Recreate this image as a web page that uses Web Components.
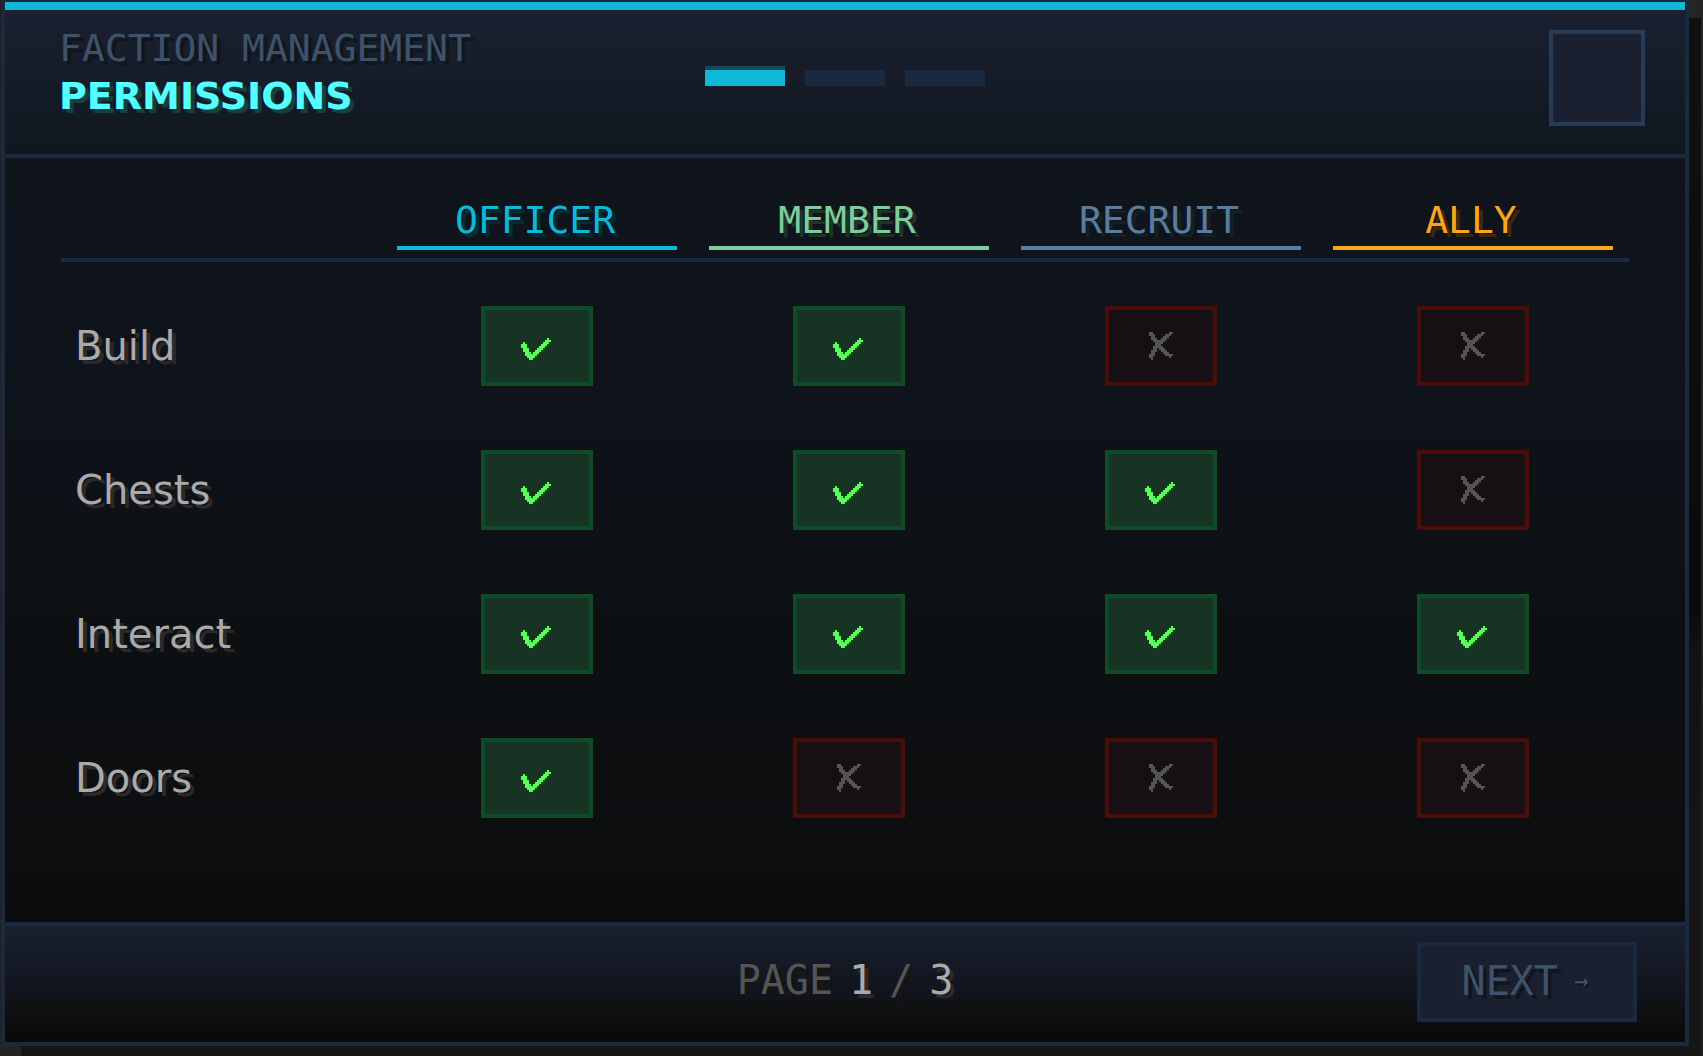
<!DOCTYPE html>
<html lang="en">
<head>
<meta charset="utf-8">
<title>Faction Management</title>
<style>
  :root {
    --line: #1b2940; --muted: #3f526b; --px: 4px;
    --mono: "DejaVu Sans Mono", monospace; --sans: "DejaVu Sans", sans-serif;
  }
  * { box-sizing: border-box; }
  body {
    margin: 0; min-height: 100vh; display: flex; flex-direction: column;
    padding: 0 14px 10px 1px;
    font: 38px/48px var(--mono);
    background:
      linear-gradient(#242424, #202020) right top / 2px 100% no-repeat,
      linear-gradient(#252523, #252523) right top / 14px 18px no-repeat,
      linear-gradient(#242424, #242424) left bottom / 21px 10px no-repeat,
      linear-gradient(#22211f, #22211f) left top / 1px 100% no-repeat,
      linear-gradient(#10110f, #0b0b0b 58%, #131313 62%, #161616);
  }
</style>
</head>
<body>
<faction-panel>
  <panel-header slot="header" heading="FACTION MANAGEMENT" subject="PERMISSIONS" pages="3" page="1"></panel-header>
  <permission-table></permission-table>
  <panel-footer slot="footer" page="1" pages="3"></panel-footer>
</faction-panel>

<script>
const base = '<style>*{box-sizing:border-box}button{font:inherit;color:inherit;cursor:pointer;border-radius:0;margin:0}</style>';

class FactionPanel extends HTMLElement {
  constructor() {
    super();
    this.attachShadow({ mode: 'open' }).innerHTML = base + `
      <style>
        :host { flex: 1; display: flex; flex-direction: column;
          border: var(--px) solid var(--line); border-top-width: 2px;
          background: linear-gradient(#10151c, #0f131b 35%, #0d1013 60%, #0b0b0c); }
        .accent { height: 8px; background: #10b8d8; }
        main { flex: 1; padding: 24px 56px 0; }
      </style>
      <div class="accent"></div>
      <slot name="header"></slot>
      <main><slot></slot></main>
      <slot name="footer"></slot>`;
  }
}
customElements.define('faction-panel', FactionPanel);

class PageSteps extends HTMLElement {
  connectedCallback() {
    const page = +this.getAttribute('page'), pages = +this.getAttribute('pages');
    this.attachShadow({ mode: 'open' }).innerHTML = base + `
      <style>
        :host { display: flex; gap: 20px; }
        i { width: 80px; height: 16px; background: var(--line); }
        i.on { background: #10b8d8; box-shadow: 0 -4px #134855; }
      </style>` +
      Array.from({ length: pages }, (_, n) => `<i class="${n + 1 === page ? 'on' : ''}"></i>`).join('');
  }
}
customElements.define('page-steps', PageSteps);

class PanelHeader extends HTMLElement {
  connectedCallback() {
    const at = n => this.getAttribute(n);
    this.attachShadow({ mode: 'open' }).innerHTML = base + `
      <style>
        :host { display: block; border-bottom: var(--px) solid var(--line);
          background: linear-gradient(#1a2030, #11171f); }
        header { display: grid; grid-template-columns: 1fr auto 1fr; height: 144px; padding: 0 40px; }
        .titles { padding: 14px 0 0 14px; white-space: nowrap; }
        p, h1 { margin: 0; font-size: 38px; line-height: 48px; }
        p { color: var(--muted); text-shadow: 4px 4px #10161b; }
        h1 { font-family: var(--sans); font-weight: bold; color: #55ffff; text-shadow: 4px 4px #153f3f; }
        page-steps { padding-top: 60px; }
        button { justify-self: end; width: 96px; height: 96px; margin-top: 20px;
          border: var(--px) solid #273b57; background: #1a2030; }
      </style>
      <header>
        <div class="titles"><p>${at('heading')}</p><h1>${at('subject')}</h1></div>
        <page-steps page="${at('page')}" pages="${at('pages')}"></page-steps>
        <button type="button" aria-label="Close"></button>
      </header>`;
  }
}
customElements.define('panel-header', PanelHeader);

/* Pixel glyphs: each entry is [row, first column, cell count]. */
const glyphs = {
  yes: { w: 15, h: 11, runs: [[0,13,1],[1,12,3],[2,1,1],[2,11,3],[3,0,3],[3,10,3],[4,0,3],[4,9,3],[5,1,3],[5,8,3],[6,1,3],[6,7,3],[7,2,3],[7,6,3],[8,2,6],[9,3,4],[10,4,2]] },
  no: { w: 12, h: 14, runs: [[0,0,2],[0,10,2],[1,0,3],[1,8,3],[2,1,2],[2,7,3],[3,1,3],[3,6,3],[4,2,6],[5,3,4],[6,3,3],[7,2,5],[8,2,2],[8,5,3],[9,1,3],[9,6,3],[10,1,2],[10,7,3],[11,0,3],[11,8,4],[12,0,2],[12,10,1],[13,1,1]] }
};
const glyphSvg = name => {
  const g = glyphs[name];
  const d = g.runs.map(([y, x, n]) => `M${x} ${y}h${n}v1h-${n}z`).join('');
  return `<svg width="${g.w * 2}" height="${g.h * 2}" viewBox="0 0 ${g.w} ${g.h}" shape-rendering="crispEdges" aria-hidden="true"><path d="${d}" fill="currentColor"/></svg>`;
};

class PermissionToggle extends HTMLElement {
  connectedCallback() {
    const on = this.hasAttribute('allowed');
    this.attachShadow({ mode: 'open' }).innerHTML = base + `
      <style>
        :host { display: flex; justify-content: center; }
        button { display: flex; align-items: center; justify-content: center;
          width: 112px; height: 80px; padding: 0; border: var(--px) solid #4a0e08;
          background: #160f13; color: #555; }
        svg { display: block; overflow: visible; filter: drop-shadow(2px 2px 0 #151515); }
        button[aria-pressed="true"] { border-color: #104b28; background: #173323; color: #55ff55; padding: 6px 2px 0 0; }
        button[aria-pressed="true"] svg { filter: drop-shadow(2px 2px 0 #153f15); }
      </style>
      <button type="button" aria-pressed="${on}" aria-label="${this.getAttribute('label')}">${glyphSvg(on ? 'yes' : 'no')}</button>`;
  }
}
customElements.define('permission-toggle', PermissionToggle);

class PermissionTable extends HTMLElement {
  connectedCallback() {
    const roles = [
      ['OFFICER', '#10b8d8', '#032c35'], ['MEMBER', '#7fcc9f', '#1f3328'],
      ['RECRUIT', '#5a7d9e', '#151f26'], ['ALLY', '#f9a51f', '#3e2907']];
    const rows = [['Build', '1100'], ['Chests', '1110'], ['Interact', '1111'], ['Doors', '1000']];
    this.attachShadow({ mode: 'open' }).innerHTML = base + `
      <style>
        :host { display: block; }
        table { width: 100%; table-layout: fixed; border-spacing: 0; }
        th, td { padding: 0; font-weight: normal; }
        thead th, thead td { height: 80px; vertical-align: bottom; border-bottom: var(--px) solid var(--line); }
        thead td { width: 320px; }
        thead span { display: block; margin: 0 16px 8px; padding: 0 4px 2px 0; text-align: center;
          border-bottom: var(--px) solid; }
        tbody::before { content: ""; display: block; height: 12px; }
        tbody th, tbody td { height: 144px; vertical-align: middle; }
        tbody th { padding-left: 14px; text-align: left; font-family: var(--sans); font-size: 40px;
          color: #aaa; text-shadow: 4px 4px #2a2a2a; }
      </style>
      <table>
        <thead><tr><td></td>${roles.map(([n, c, s]) =>
          `<th scope="col"><span style="color:${c};text-shadow:4px 4px ${s}">${n}</span></th>`).join('')}</tr></thead>
        <tbody>${rows.map(([n, bits]) => `<tr><th scope="row">${n}</th>${[...bits].map((b, i) =>
          `<td><permission-toggle label="${n}: ${roles[i][0]}" ${b === '1' ? 'allowed' : ''}></permission-toggle></td>`).join('')}</tr>`).join('')}</tbody>
      </table>`;
  }
}
customElements.define('permission-table', PermissionTable);

class PanelFooter extends HTMLElement {
  connectedCallback() {
    this.attachShadow({ mode: 'open' }).innerHTML = base + `
      <style>
        :host { display: block; font-size: 40px; border-top: var(--px) solid var(--line);
          background: linear-gradient(#1a2030, #10131b 62%, #111214 66%, #090909); }
        footer { display: grid; grid-template-columns: 1fr auto 1fr; align-items: start;
          height: 116px; padding: 16px 48px 0; }
        .count { grid-column: 2; display: flex; gap: 16px; padding-top: 14px;
          color: #555; text-shadow: 4px 4px #151515; }
        b { font-weight: normal; color: #aaa; text-shadow: 4px 4px #2a2a2a; }
        button { justify-self: end; display: flex; align-items: center; justify-content: center; gap: 16px;
          width: 220px; height: 80px; padding: 0 4px 2px 0; border: var(--px) solid var(--line);
          background: #1a2030; color: var(--muted); text-shadow: 4px 4px #10161b; }
        small { font-size: 24px; text-shadow: 2px 2px #10161b; }
      </style>
      <footer>
        <div class="count"><span>PAGE</span> <b>${this.getAttribute('page')}</b> <span>/</span> <b>${this.getAttribute('pages')}</b></div>
        <button type="button"><span>NEXT</span> <small>→</small></button>
      </footer>`;
  }
}
customElements.define('panel-footer', PanelFooter);
</script>
</body>
</html>
